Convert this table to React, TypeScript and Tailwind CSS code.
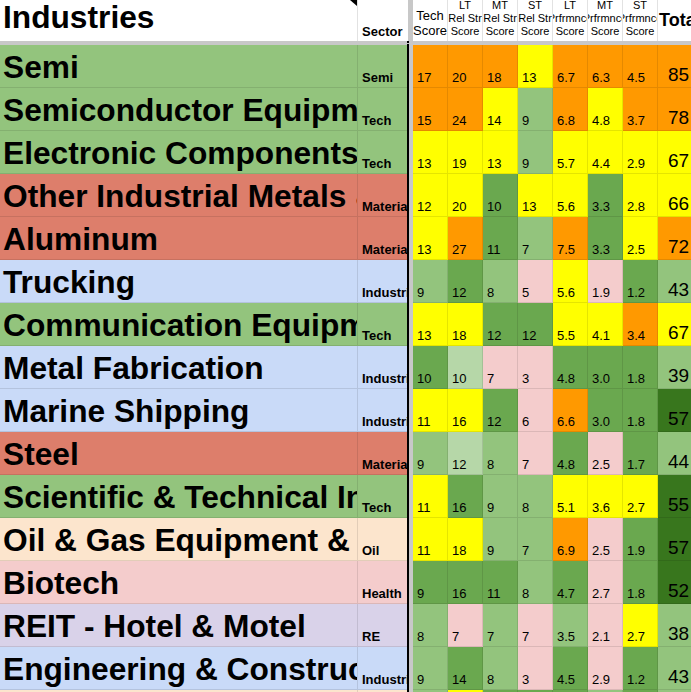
import React from 'react'

type Shade = 'O' | 'Y' | 'MG' | 'LG' | 'VLG' | 'P' | 'DG'

const shade: Record<Shade, string> = {
  O: 'bg-[#ff9900]',
  Y: 'bg-[#ffff00]',
  MG: 'bg-[#6aa84f]',
  LG: 'bg-[#93c47d]',
  VLG: 'bg-[#b6d7a8]',
  P: 'bg-[#f4cccc]',
  DG: 'bg-[#38761d]',
}

const sectorBg: Record<string, string> = {
  Semi: 'bg-[#93c47d]',
  Tech: 'bg-[#93c47d]',
  Materials: 'bg-[#dd7e6b]',
  Industrials: 'bg-[#c9daf8]',
  Oil: 'bg-[#fce5cd]',
  Health: 'bg-[#f4cccc]',
  RE: 'bg-[#d9d2e9]',
}

type Row = {
  name: string
  sector: string
  scores: [string, Shade][]
  total: [string, Shade]
}

const r = (
  name: string,
  sector: string,
  vals: string,
  colors: string,
  total: string,
  totalColor: Shade
): Row => {
  const v = vals.split(' ')
  const c = colors.split(' ') as Shade[]
  return { name, sector, scores: v.map((x, i) => [x, c[i]]), total: [total, totalColor] }
}

const rows: Row[] = [
  r('Semi', 'Semi', '17 20 18 13 6.7 6.3 4.5', 'O O O Y O O O', '85', 'O'),
  r('Semiconductor Equipment & Materials', 'Tech', '15 24 14 9 6.8 4.8 3.7', 'O O Y LG O Y O', '78', 'O'),
  r('Electronic Components', 'Tech', '13 19 13 9 5.7 4.4 2.9', 'Y Y Y LG Y Y Y', '67', 'Y'),
  r('Other Industrial Metals & Mining', 'Materials', '12 20 10 13 5.6 3.3 2.8', 'Y Y MG Y Y MG Y', '66', 'Y'),
  r('Aluminum', 'Materials', '13 27 11 7 7.5 3.3 2.5', 'Y O MG LG O MG Y', '72', 'O'),
  r('Trucking', 'Industrials', '9 12 8 5 5.6 1.9 1.2', 'LG MG LG P Y P MG', '43', 'LG'),
  r('Communication Equipment', 'Tech', '13 18 12 12 5.5 4.1 3.4', 'Y Y MG MG Y Y O', '67', 'Y'),
  r('Metal Fabrication', 'Industrials', '10 10 7 3 4.8 3.0 1.8', 'MG VLG P P MG MG MG', '39', 'LG'),
  r('Marine Shipping', 'Industrials', '11 16 12 6 6.6 3.0 1.8', 'Y Y MG P O MG MG', '57', 'DG'),
  r('Steel', 'Materials', '9 12 8 7 4.8 2.5 1.7', 'LG VLG LG P MG P MG', '44', 'LG'),
  r('Scientific & Technical Instruments', 'Tech', '11 16 9 8 5.1 3.6 2.7', 'Y MG LG LG Y Y Y', '55', 'DG'),
  r('Oil & Gas Equipment & Services', 'Oil', '11 18 9 7 6.9 2.5 1.9', 'Y Y LG LG O P MG', '57', 'DG'),
  r('Biotech', 'Health', '9 16 11 8 4.7 2.7 1.8', 'MG MG MG LG MG P MG', '52', 'DG'),
  r('REIT - Hotel & Motel', 'RE', '8 7 7 7 3.5 2.1 2.7', 'LG P LG P LG P Y', '38', 'LG'),
  r('Engineering & Construction', 'Industrials', '9 14 8 3 4.5 2.9 1.2', 'LG MG LG P MG P MG', '43', 'LG'),
  r('Oil & Gas Drilling', 'Oil', '9 14 8 3 4.5 2.9 1.2', 'LG Y MG MG MG LG MG', '', 'LG'),
]

const smallHeads = [
  ['LT', 'Rel Str', 'Score'],
  ['MT', 'Rel Str', 'Score'],
  ['ST', 'Rel Str', 'Score'],
  ['LT', 'Prfrmnce', 'Score'],
  ['MT', 'Prfrmnce', 'Score'],
  ['ST', 'Prfrmnce', 'Score'],
]

export default function App() {
  return (
    <div className="h-[692px] w-[691px] overflow-hidden bg-white font-['Liberation_Sans',Arial,sans-serif] text-black">
      {/* header */}
      <div className="flex h-[41px]">
        <div className="relative flex w-[358px] shrink-0 items-end border-r border-[#e2e2e2] pb-[6px] pl-[3px] text-[31.7px] font-bold leading-[36px]">
          Industries
          <svg className="absolute right-0 top-0" width="7" height="6" viewBox="0 0 7 6">
            <polygon points="0,0 7,0 7,6" fill="#000" />
          </svg>
        </div>
        <div className="flex w-[50px] shrink-0 items-end pb-[2px] pl-[4px] text-[13px] font-bold leading-[15px]">
          Sector
        </div>
        <div className="w-[5px] shrink-0 bg-[#c8c8c8]" />
        <div className="flex w-[35px] shrink-0 flex-col items-center justify-end overflow-hidden whitespace-nowrap border-r border-[#e2e2e2] pb-[3px] text-[13px] leading-[15px]">
          <span>Tech</span>
          <span>Score</span>
        </div>
        {smallHeads.map((h, i) => (
          <div
            key={i}
            className="flex w-[35px] shrink-0 flex-col items-center justify-end overflow-hidden whitespace-nowrap border-r border-[#e2e2e2] pb-[3px] text-[11px] leading-[13px]"
          >
            {h.map((t) => (
              <span key={t}>{t}</span>
            ))}
          </div>
        ))}
        <div className="flex min-w-0 flex-1 items-end overflow-hidden whitespace-nowrap pb-[11px] pl-[1px] text-[18px] font-bold leading-[20px]">
          Total
        </div>
      </div>

      {/* frozen row divider */}
      <div className="flex h-[4px] bg-[#c8c8c8]">
        <div className="w-[407px] shrink-0" />
        <div className="w-[2px] shrink-0 bg-[repeating-linear-gradient(to_bottom,#000_0,#000_2px,transparent_2px,transparent_3px)]" />
      </div>

      {rows.map((row, i) => (
        <div key={i} className="flex h-[43px]">
          <div
            className={`flex w-[358px] shrink-0 items-end overflow-hidden whitespace-nowrap border-b border-r border-black/10 pb-[2px] pl-[3px] text-[31.7px] font-bold leading-[36px] ${sectorBg[row.sector]}`}
          >
            {row.name}
          </div>
          <div
            className={`flex w-[49px] shrink-0 items-end overflow-hidden whitespace-nowrap border-b border-black/10 pb-[2px] pl-[4px] text-[13px] font-bold leading-[15px] ${sectorBg[row.sector]}`}
          >
            {row.sector}
          </div>
          <div className="w-[2px] shrink-0 bg-black" />
          <div className="w-[4px] shrink-0 bg-[#c8c8c8]" />
          {row.scores.map(([v, c], j) => (
            <div
              key={j}
              className={`flex w-[35px] shrink-0 items-end border-b border-r border-black/10 pb-[2px] pl-[4px] text-[13px] leading-[15px] ${shade[c]}`}
            >
              {v}
            </div>
          ))}
          <div
            className={`flex min-w-0 flex-1 items-end border-b border-black/10 pb-[1px] pl-[10px] text-[19px] leading-[22px] ${shade[row.total[1]]}`}
          >
            {row.total[0]}
          </div>
        </div>
      ))}
    </div>
  )
}
